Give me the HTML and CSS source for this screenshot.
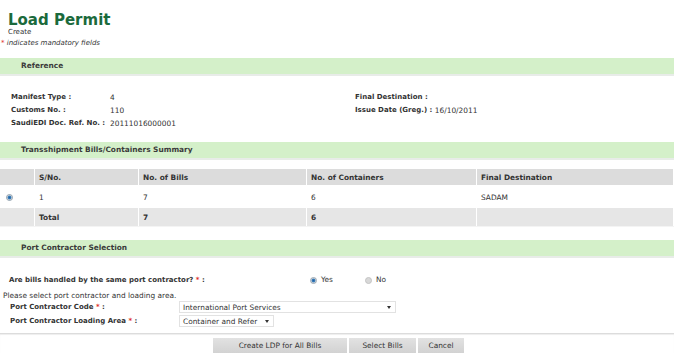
FILE: index.html
```html
<!DOCTYPE html>
<html lang="en">
<head>
    <meta charset="UTF-8">
    <title>Load Permit</title>
    <link rel="stylesheet" href="styles.css">
</head>
<body>
    <!-- Page title -->
    <header class="page-head">
        <h1>Load Permit</h1>
        <p class="sub">Create</p>
        <p class="note"><span class="req">*</span> indicates mandatory fields</p>
    </header>

    <!-- Reference details -->
    <div class="bar">Reference</div>
    <div class="details">
        <div class="detail-col">
            <div class="detail"><span class="label">Manifest Type :</span><span>4</span></div>
            <div class="detail"><span class="label">Customs No. :</span><span>110</span></div>
            <div class="detail"><span class="label">SaudiEDI Doc. Ref. No. :</span><span>20111016000001</span></div>
        </div>
        <div class="detail-col right">
            <div class="detail"><span class="label">Final Destination :</span></div>
            <div class="detail"><span class="label">Issue Date (Greg.) :</span>&nbsp;<span>16/10/2011</span></div>
        </div>
    </div>

    <!-- Bills summary table -->
    <div class="bar">Transshipment Bills/Containers Summary</div>
    <table class="summary">
        <thead>
            <tr>
                <th class="sel"></th>
                <th class="c-no">S/No.</th>
                <th class="c-bills">No. of Bills</th>
                <th class="c-cont">No. of Containers</th>
                <th>Final Destination</th>
            </tr>
        </thead>
        <tbody>
            <tr class="row">
                <td class="sel"><span class="radio checked"></span></td>
                <td>1</td>
                <td>7</td>
                <td>6</td>
                <td>SADAM</td>
            </tr>
            <tr class="total">
                <td class="sel"></td>
                <td>Total</td>
                <td>7</td>
                <td>6</td>
                <td></td>
            </tr>
        </tbody>
    </table>

    <!-- Port contractor -->
    <div class="bar">Port Contractor Selection</div>
    <div class="question">
        <span class="q-label">Are bills handled by the same port contractor? <span class="req">*</span> :</span>
        <span class="choice"><span class="radio checked"></span>Yes</span>
        <span class="choice"><span class="radio"></span>No</span>
    </div>
    <p class="hint">Please select port contractor and loading area.</p>
    <div class="field">
        <span class="f-label">Port Contractor Code <span class="req">*</span> :</span>
        <div class="select wide"><span>International Port Services</span><span class="arrow"></span></div>
    </div>
    <div class="field">
        <span class="f-label">Port Contractor Loading Area <span class="req">*</span> :</span>
        <div class="select narrow"><span>Container and Refer</span><span class="arrow"></span></div>
    </div>

    <div class="actions">
        <button class="btn b-create">Create LDP for All Bills</button>
        <button class="btn b-select">Select Bills</button>
        <button class="btn b-cancel">Cancel</button>
    </div>
</body>
</html>
```

FILE: styles.css
```css
/* Base */
body {
    margin: 0;
    width: 675px;
    font-family: 'DejaVu Sans', Verdana, sans-serif;
    font-size: 7.4px;
    color: #333;
    background: #fff;
}
p {
    margin: 0;
}
.req {
    color: #e0302a;
}

/* Title block */
.page-head {
    padding: 12px 0 0 0;
    height: 46px;
}
h1 {
    margin: 0 0 0 8px;
    font-size: 15px;
    line-height: 16px;
    color: #1b6a3c;
}
.sub {
    margin-left: 8px;
    line-height: 9px;
    font-size: 7px;
}
.note {
    margin-top: 1px;
    font-style: italic;
    font-size: 7px;
    line-height: 10px;
    padding-left: 1px;
}

/* Green section bars */
.bar {
    width: 653px;
    height: 16px;
    line-height: 16px;
    background: #d4f0c9;
    border-bottom: 2px solid #e8ece8;
    padding-left: 21px;
    font-weight: bold;
    font-size: 7.4px;
    color: #3b3b3b;
}

/* Reference details */
.details {
    display: flex;
    padding: 15px 0 12px 11px;
}
.detail-col {
    flex: none;
    width: 344px;
}
.detail-col.right {
    width: auto;
}
.detail {
    display: flex;
    height: 13px;
    line-height: 13px;
}
.detail .label {
    font-weight: bold;
    font-size: 7px;
    min-width: 99px;
}
.right .detail .label {
    min-width: 0;
}

/* Summary table */
.summary {
    width: 674px;
    margin-top: 9px;
    border-collapse: collapse;
}
.summary th, .summary td {
    text-align: left;
    padding: 0 0 0 4px;
    border-right: 1px solid #fff;
}
.summary th {
    height: 16px;
    background: #dcdcdc;
    border-bottom: 1px solid #fff;
}
.summary .sel {
    width: 28px;
    padding-left: 6px;
}
.c-no { width: 99px; }
.c-bills { width: 163px; }
.c-cont { width: 165px; }
.row td {
    height: 22px;
}
.total td {
    height: 18px;
    background: #e6e6e6;
    font-weight: bold;
    border-bottom: 1px solid #f4f4f4;
}

/* Radio buttons */
.radio {
    display: inline-block;
    width: 7px;
    height: 7px;
    border-radius: 50%;
    background: #d8d8d8;
    border: 1px solid #c4c4c4;
    vertical-align: middle;
    box-sizing: border-box;
}
.radio.checked {
    background: radial-gradient(circle, #1f5fa0 0, #3c82c0 1.6px, #c8d0d8 2.2px);
    border-color: #9aa8b4;
}

/* Port contractor */
.summary + .bar {
    margin-top: 13px;
}
.question {
    display: flex;
    align-items: center;
    padding: 16px 0 0 9px;
    height: 11px;
}
.q-label {
    width: 301px;
    font-weight: bold;
    font-size: 7px;
}
.choice {
    display: flex;
    align-items: flex-start;
    width: 55px;
}
.choice .radio {
    margin: 2px 4px 0 0;
}
.hint {
    margin-top: 6px;
    padding-left: 3px;
    line-height: 9px;
}
.field {
    display: flex;
    align-items: center;
    padding-left: 10px;
    height: 14px;
}
.f-label {
    width: 169px;
    font-weight: bold;
    font-size: 7px;
}
.select {
    display: flex;
    justify-content: space-between;
    align-items: center;
    height: 12px;
    border: 1px solid #e2e2e2;
    box-sizing: border-box;
    padding: 0 4px 0 3px;
    background: #fff;
}
.select.wide { width: 217px; }
.select.narrow { width: 95px; }
.arrow {
    width: 0;
    height: 0;
    border-left: 2.5px solid transparent;
    border-right: 2.5px solid transparent;
    border-top: 3px solid #333;
}

/* Buttons */
.actions {
    display: flex;
    gap: 2px;
    padding: 4px 0 0 213px;
    margin-top: 5px;
    border-top: 1px solid #dcdcdc;
    box-shadow: inset 0 1px 1px #eee;
    width: 461px;
}
.btn {
    height: 15px;
    border: none;
    padding: 0;
    font-family: inherit;
    font-size: 7.4px;
    color: #333;
    background: linear-gradient(#e2e2e2, #d2d2d2);
}
.b-create { width: 134px; }
.b-select { width: 67px; }
.b-cancel { width: 46px; }
```
